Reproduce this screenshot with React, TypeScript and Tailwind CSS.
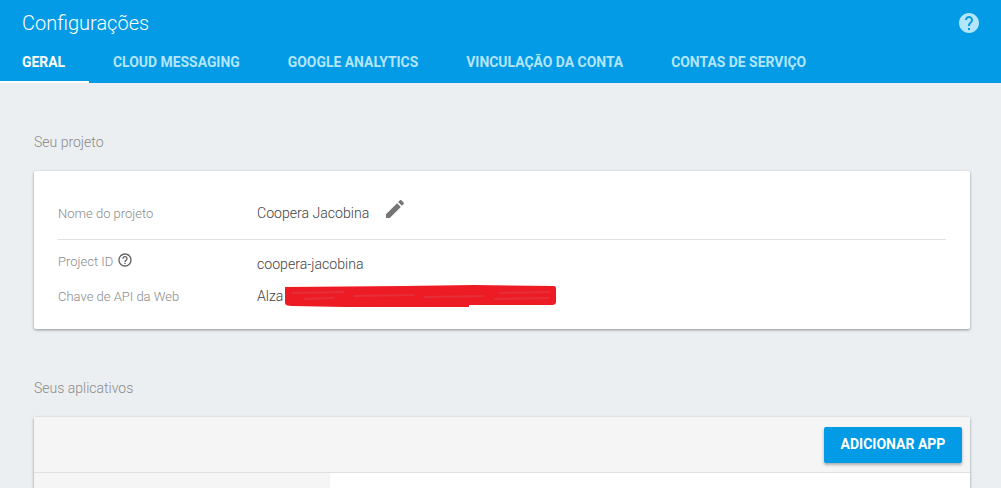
const tabs = ["CLOUD MESSAGING", "GOOGLE ANALYTICS", "VINCULAÇÃO DA CONTA", "CONTAS DE SERVIÇO"];

function Scribble() {
  return (
    <svg width="272" height="24" viewBox="0 0 272 24" className="mb-[2px] block">
      <path d="M1 3 L120 2 L190 1 L270 2 Q272 2 272 5 L272 18 Q272 21 268 21 L185 21 L185 23 L60 23 L8 22 Q1 22 1 19 Z" fill="#ed1c24" />
      <path d="M8 9 L60 8 M70 12 L130 11 M140 13 L200 12 M215 9 L266 8 M20 15 L50 14 M210 15 L265 14" stroke="#e52f38" strokeWidth="2" fill="none" />
    </svg>
  );
}

export default function App() {
  return (
    <div className="h-[488px] overflow-hidden bg-[#eceff1] font-['Roboto',sans-serif]">
      {/* Header */}
      <header className="h-[83px] bg-[#039be5]">
        <div className="flex h-[46px] items-center justify-between pl-[22px] pr-[20px]">
          <h1 className="text-[20px] font-light text-white">Configurações</h1>
          <svg width="24" height="24" viewBox="0 0 24 24" fill="#b3e5fc">
            <path d="M12 2C6.48 2 2 6.48 2 12s4.48 10 10 10 10-4.48 10-10S17.52 2 12 2zm1 17h-2v-2h2v2zm2.07-7.75l-.9.92C13.45 12.9 13 13.5 13 15h-2v-.5c0-1.1.45-2.1 1.17-2.83l1.24-1.26c.37-.36.59-.86.59-1.41 0-1.1-.9-2-2-2s-2 .9-2 2H8c0-2.21 1.79-4 4-4s4 1.79 4 4c0 .88-.36 1.68-.93 2.25z" />
          </svg>
        </div>
        <nav className="flex h-[37px] text-[13.93px] font-bold">
          <div className="flex w-[89px] items-center border-b-2 border-white pb-[3px] pl-[22px] text-white">GERAL</div>
          {tabs.map((tab) => (
            <div key={tab} className="flex items-center px-6 pb-[5px] text-[#b3e5fc]">{tab}</div>
          ))}
        </nav>
      </header>

      <main className="pl-[34px] pr-[31px]">
        <h2 className="pt-[50px] text-[14px] leading-[18px] font-light text-[#8a8a8a]">Seu projeto</h2>

        {/* Project card */}
        <section className="mt-[20px] h-[158px] rounded-[2px] bg-white px-6 shadow-[0_1px_3px_rgba(0,0,0,0.4)]">
          <div className="flex h-[69px] items-center border-b border-[#e0e0e0] pt-[29px] pb-[12px]">
            <span className="w-[199px] text-[13px] font-light text-[#8a8a8a]">Nome do projeto</span>
            <span className="text-[14.1px] font-light text-[#424242]">Coopera Jacobina</span>
            <svg width="24" height="24" viewBox="0 0 24 24" fill="#757575" className="mb-[10px] ml-[14px]">
              <path d="M3 17.25V21h3.75L17.81 9.94l-3.75-3.75L3 17.25zM20.71 7.04c.39-.39.39-1.02 0-1.41l-2.34-2.34c-.39-.39-1.02-.39-1.41 0l-1.83 1.83 3.75 3.75 1.83-1.83z" />
            </svg>
          </div>
          <div className="flex h-[33px] items-center pt-[16px]">
            <span className="mb-[6px] flex w-[199px] items-center gap-[4px] text-[13px] font-light text-[#8a8a8a]">
              Project ID
              <svg width="16" height="16" viewBox="0 0 24 24" fill="#616161" className="mb-[3px]">
                <path d="M11 18h2v-2h-2v2zm1-16C6.48 2 2 6.48 2 12s4.48 10 10 10 10-4.48 10-10S17.52 2 12 2zm0 18c-4.41 0-8-3.59-8-8s3.59-8 8-8 8 3.59 8 8-3.59 8-8 8zm0-14c-2.21 0-4 1.79-4 4h2c0-1.1.9-2 2-2s2 .9 2 2c0 2-3 1.75-3 5h2c0-2.25 3-2.5 3-5 0-2.21-1.79-4-4-4z" />
              </svg>
            </span>
            <span className="text-[14.1px] font-light text-[#424242]">coopera-jacobina</span>
          </div>
          <div className="flex h-[33px] items-center pt-[14px]">
            <span className="w-[199px] text-[13px] font-light text-[#8a8a8a]">Chave de API da Web</span>
            <span className="w-[27px] text-[14.1px] font-light text-[#424242]">Alza</span>
            <Scribble />
          </div>
        </section>

        <h2 className="pt-[50px] text-[14px] leading-[18px] font-light text-[#8a8a8a]">Seus aplicativos</h2>

        {/* Apps card */}
        <section className="mt-[20px] rounded-[2px] bg-white shadow-[0_1px_3px_rgba(0,0,0,0.4)]">
          <div className="flex h-[56px] items-center justify-end border-b border-[#e0e0e0] bg-[#f5f5f5] pr-2">
            <button className="h-[36px] w-[138px] rounded-[2px] bg-[#039be5] text-[14px] font-bold text-white shadow-[0_2px_3px_rgba(0,0,0,0.3)]">ADICIONAR APP</button>
          </div>
          <div className="flex h-[40px]">
            <div className="w-[296px] bg-[#f5f5f5]" />
          </div>
        </section>
      </main>
    </div>
  );
}
